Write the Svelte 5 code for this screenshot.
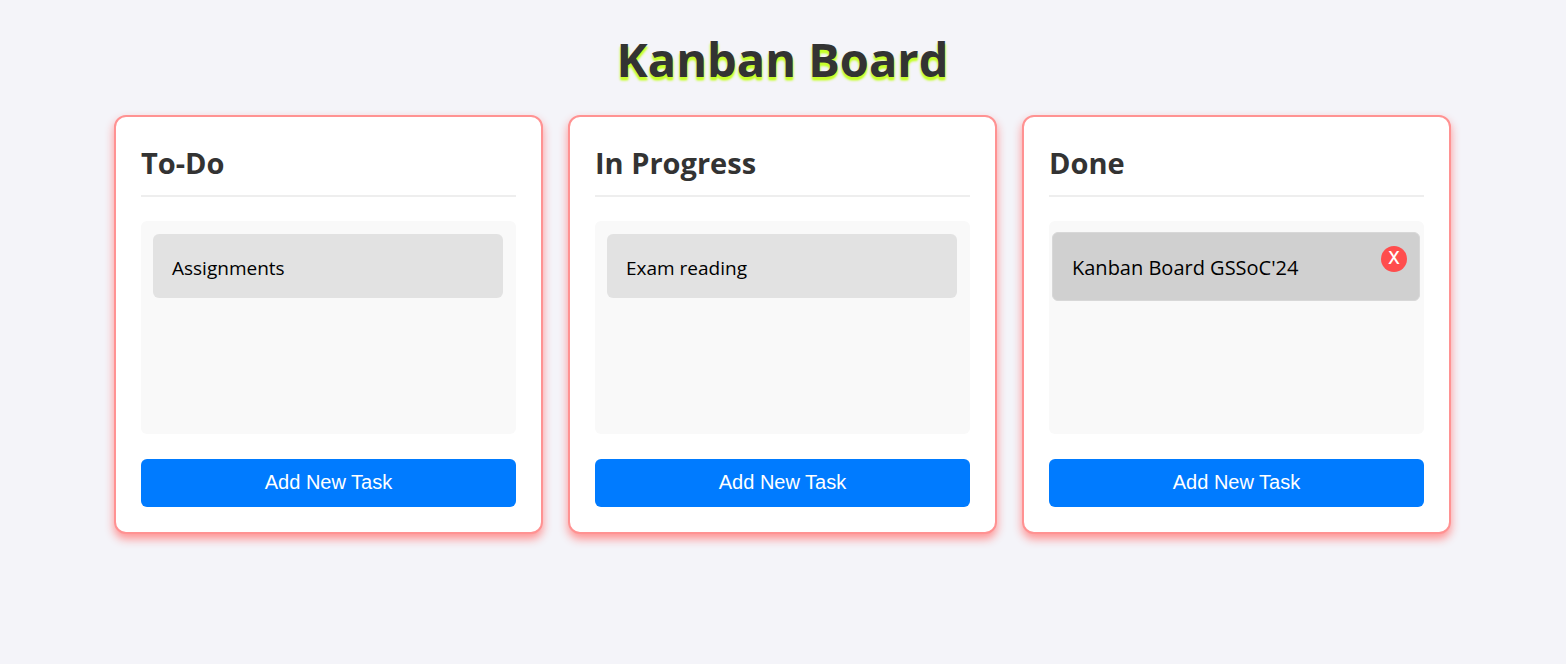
<script>
  let columns = $state([
    { title: 'To-Do', tasks: [{ text: 'Assignments', active: false }] },
    { title: 'In Progress', tasks: [{ text: 'Exam reading', active: false }] },
    { title: 'Done', tasks: [{ text: "Kanban Board GSSoC'24", active: true }] }
  ]);

  function addTask(column) {
    column.tasks.push({ text: 'New task', active: false });
  }

  function removeTask(column, index) {
    column.tasks.splice(index, 1);
  }
</script>

<main>
  <h1>Kanban Board</h1>
  <div class="board">
    {#each columns as column}
      <section class="column">
        <h2>{column.title}</h2>
        <ul class="tasks">
          {#each column.tasks as task, i}
            <li class="task" class:active={task.active}>
              <span>{task.text}</span>
              {#if task.active}
                <button class="remove" type="button" onclick={() => removeTask(column, i)}>X</button>
              {/if}
            </li>
          {/each}
        </ul>
        <button class="add" type="button" onclick={() => addTask(column)}>Add New Task</button>
      </section>
    {/each}
  </div>
</main>

<style>
  :global(body) {
    margin: 0;
    background: #f4f4f9;
  }

  main {
    box-sizing: border-box;
    padding: 26px 26px 26px 25px;
    font-family: 'Segoe UI', 'Open Sans', 'Noto Sans', sans-serif;
    color: #000;
  }

  h1 {
    margin: 0 0 23px;
    font-size: 47px;
    line-height: 66px;
    font-weight: 700;
    text-align: center;
    color: #333;
    text-shadow: 0 3px 2px #c6ff2a, 0 3px 3px #c6ff2a;
  }

  .board {
    display: grid;
    grid-template-columns: repeat(3, minmax(0, 1fr));
    gap: 25px;
    max-width: 1337px;
    margin: 0 auto;
  }

  .column {
    display: flex;
    flex-direction: column;
    padding: 25px;
    border: 2px solid #ff9292;
    border-radius: 12px;
    background: #fff;
    box-shadow: 0 5px 10px #ff9292;
  }

  h2 {
    margin: 0 0 24px;
    padding-bottom: 12px;
    border-bottom: 2px solid #eee;
    font-size: 29px;
    line-height: 41px;
    font-weight: 700;
    color: #333;
  }

  .tasks {
    display: flex;
    flex-direction: column;
    gap: 12px;
    flex: 1;
    min-height: 188px;
    margin: 0 0 25px;
    padding: 13px 13px 12px 12px;
    border-radius: 6px;
    background: #f9f9f9;
    list-style: none;
  }

  .task {
    display: flex;
    justify-content: space-between;
    align-items: center;
    padding: 21px 19px 17px;
    border-radius: 6px;
    background: #e2e2e2;
    font-size: 19px;
    line-height: 26px;
  }

  .task.active {
    margin: -2px -9px;
    padding: 21px 12px 19px 19px;
    border: 1px solid #d8d8d8;
    background: #d0d0d0;
    font-size: 20px;
    line-height: 27px;
  }

  .remove {
    align-self: flex-start;
    width: 26px;
    height: 26px;
    margin-top: -8px;
    padding: 0 0 2px;
    border: 0;
    border-radius: 50%;
    background: #ff4d4d;
    color: #fff;
    font: 500 17px/24px 'Inter', Arial, sans-serif;
    cursor: pointer;
  }

  .add {
    height: 48px;
    padding: 0 12px 2px;
    border: 0;
    border-radius: 6px;
    background: #007bff;
    color: #fff;
    font: 20px/24px 'Liberation Sans', Arial, sans-serif;
    cursor: pointer;
  }
</style>
